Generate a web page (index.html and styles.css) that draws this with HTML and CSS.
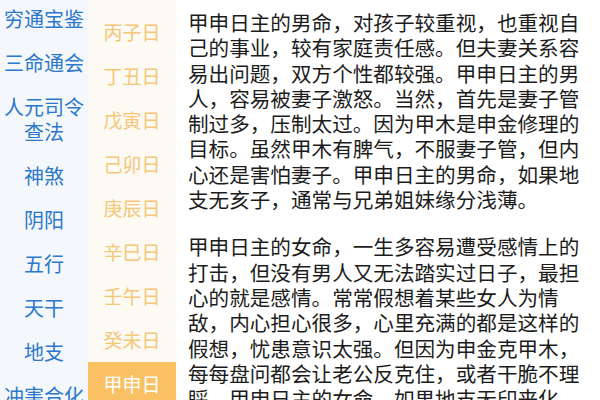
FILE: index.html
```html
<!DOCTYPE html>
<html lang="zh">
<head>
<meta charset="utf-8">
<link rel="stylesheet" href="styles.css">
</head>
<body>
<div class="page">
  <nav class="cats">
    <div class="cat">穷通宝鉴</div>
    <div class="cat">三命通会</div>
    <div class="cat">人元司令查法</div>
    <div class="cat">神煞</div>
    <div class="cat">阴阳</div>
    <div class="cat">五行</div>
    <div class="cat">天干</div>
    <div class="cat">地支</div>
    <div class="cat">冲害合化</div>
  </nav>
  <div class="days">
    <div class="day">丙子日</div>
    <div class="day">丁丑日</div>
    <div class="day">戊寅日</div>
    <div class="day">己卯日</div>
    <div class="day">庚辰日</div>
    <div class="day">辛巳日</div>
    <div class="day">壬午日</div>
    <div class="day">癸未日</div>
    <div class="day active">甲申日</div>
  </div>
  <main class="content">
    <p>甲申日主的男命，对孩子较重视，也重视自己的事业，较有家庭责任感。但夫妻关系容易出问题，双方个性都较强。甲申日主的男人，容易被妻子激怒。当然，首先是妻子管制过多，压制太过。因为甲木是申金修理的目标。虽然甲木有脾气，不服妻子管，但内心还是害怕妻子。甲申日主的男命，如果地支无亥子，通常与兄弟姐妹缘分浅薄。</p>
    <p>甲申日主的女命，一生多容易遭受感情上的打击，但没有男人又无法踏实过日子，最担心的就是感情。常常假想着某些女人为情敌，内心担心很多，心里充满的都是这样的假想，忧患意识太强。但因为申金克甲木，每每盘问都会让老公反克住，或者干脆不理睬，甲申日主的女命，如果地支无印来化，婚姻多有波折，宜晚婚为佳。</p>
  </main>
</div>
</body>
</html>
```
FILE: styles.css
```css
html, body {
  margin: 0;
  padding: 0;
}
body {
  width: 600px;
  height: 400px;
  overflow: hidden;
  background: #ffffff;
  font-family: "Noto Sans CJK SC", "Noto Sans", sans-serif;
}
.page {
  display: flex;
  height: 400px;
  overflow: hidden;
}
.cats {
  width: 88px;
  flex: none;
  background: #f4f7fb;
  display: flex;
  flex-direction: column;
}
.cat {
  margin: 0;
  padding: 9.5px 0;
  line-height: 25px;
  font-size: 20px;
  color: #2c78cc;
  text-align: center;
  flex: none;
}
.cat:first-child {
  margin-top: -3.5px;
}
.days {
  width: 88px;
  flex: none;
  background: #fdfaf3;
  padding-top: 10px;
  display: flex;
  flex-direction: column;
}
.day {
  height: 44px;
  line-height: 44px;
  font-size: 19px;
  color: #f4c779;
  text-align: center;
  flex: none;
}
.day.active {
  background: #f9c164;
  color: #ffffff;
}
.content {
  flex: 1;
  padding: 10px 10px 0 12px;
  color: #1c1c1c;
  font-size: 20.6px;
  line-height: 25.3px;
}
.content p {
  margin: 0 0 22px 0;
}
```
